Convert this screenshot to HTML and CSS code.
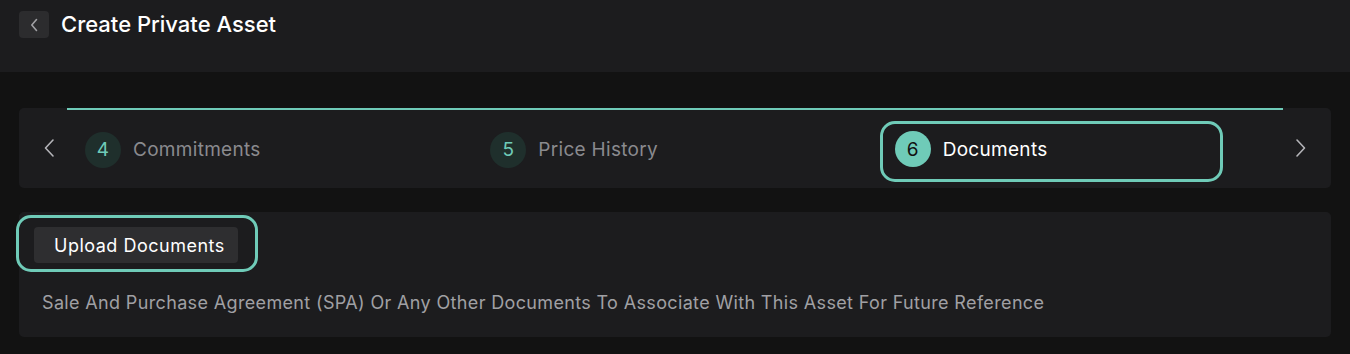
FILE: index.html
```html
<!DOCTYPE html>
<html lang="en">
<head>
    <meta charset="UTF-8">
    <meta name="viewport" content="width=device-width, initial-scale=1.0">
    <title>Create Private Asset</title>
    <link rel="stylesheet" href="styles.css">
</head>
<body>
    <header class="topbar">
        <button class="back-btn" aria-label="Back">
            <svg width="10" height="14" viewBox="0 0 10 14"><path d="M7.5 1.5L2.8 7l4.7 5.5" fill="none" stroke="#a0a0a4" stroke-width="1.6" stroke-linecap="round" stroke-linejoin="round"/></svg>
        </button>
        <h1 class="title">Create Private Asset</h1>
    </header>

    <main class="content">
        <!-- ステップ表示 -->
        <div class="stepper">
            <button class="nav-btn nav-prev" aria-label="Previous">
                <svg width="12" height="20" viewBox="0 0 12 20"><path d="M10 2L2.5 10l7.5 8" fill="none" stroke="#b4b4b8" stroke-width="1.6" stroke-linecap="round" stroke-linejoin="round"/></svg>
            </button>
            <div class="steps">
                <div class="step">
                    <span class="step-num">4</span>
                    <span class="step-label">Commitments</span>
                </div>
                <div class="step">
                    <span class="step-num">5</span>
                    <span class="step-label">Price History</span>
                </div>
                <div class="step-slot">
                    <div class="step step-active">
                        <span class="step-num">6</span>
                        <span class="step-label">Documents</span>
                    </div>
                </div>
            </div>
            <button class="nav-btn nav-next" aria-label="Next">
                <svg width="12" height="20" viewBox="0 0 12 20"><path d="M2 2l7.5 8L2 18" fill="none" stroke="#b4b4b8" stroke-width="1.6" stroke-linecap="round" stroke-linejoin="round"/></svg>
            </button>
        </div>

        <!-- ドキュメント -->
        <section class="doc-card">
            <div class="upload-ring">
                <button class="upload-btn">Upload Documents</button>
            </div>
            <p class="doc-text">Sale And Purchase Agreement (SPA) Or Any Other Documents To Associate With This Asset For Future Reference</p>
        </section>
    </main>
</body>
</html>
```

FILE: styles.css
```css
body {
    margin: 0;
    background-color: #121212;
    font-family: Inter, "Noto Sans", sans-serif;
    color: #fff;
}
button {
    font-family: inherit;
    border: none;
    cursor: pointer;
    padding: 0;
}
.topbar {
    height: 72px;
    box-sizing: border-box;
    background-color: #1c1c1e;
    display: flex;
    align-items: flex-start;
    padding: 11px 19px 0;
    gap: 12px;
}
.back-btn {
    width: 30px;
    height: 27px;
    border-radius: 4px;
    background-color: #2c2c2e;
    display: flex;
    justify-content: center;
    align-items: center;
}
.title {
    margin: 0;
    font-size: 22px;
    font-weight: 500;
    line-height: 26px;
}
.content {
    padding: 36px 19px 0;
}
.stepper {
    display: flex;
    height: 80px;
    background-color: #1c1c1e;
    border-radius: 5px;
}
.nav-btn {
    width: 48px;
    background: none;
    display: flex;
    align-items: center;
}
.nav-prev {
    padding-left: 24px;
}
.nav-next {
    padding-left: 12px;
}
.steps {
    flex: 1;
    display: grid;
    grid-template-columns: repeat(3, 1fr);
    border-top: 2px solid #6fcbb8;
    align-items: center;
}
.step {
    display: flex;
    align-items: center;
    gap: 12px;
    padding-left: 18px;
    margin-top: 1px;
}
.step-slot {
    padding-left: 2px;
    margin-top: 5px;
}
.step-num {
    width: 36px;
    height: 36px;
    border-radius: 50%;
    background-color: #1f2f2c;
    color: #6fcbb8;
    font-size: 19px;
    display: flex;
    justify-content: center;
    align-items: center;
}
.step-label {
    font-size: 19px;
    letter-spacing: 0.3px;
    color: #8a8a8e;
}
.step-active {
    margin: 0;
    padding: 7px 12px 12px;
    width: 343px;
    box-sizing: border-box;
    border: 3px solid #6fcbb8;
    border-radius: 15px;
}
.step-active .step-num {
    background-color: #6fcbb8;
    color: #111;
}
.step-active .step-label {
    color: #fff;
}
.doc-card {
    margin-top: 24px;
    background-color: #1c1c1e;
    border-radius: 5px;
    padding: 3px 0 24px;
}
.upload-ring {
    display: inline-block;
    margin-left: -3px;
    padding: 9px 17px 6px 15px;
    border: 3px solid #6fcbb8;
    border-radius: 15px;
}
.upload-btn {
    display: block;
    height: 36px;
    padding: 0 13px 0 20px;
    border-radius: 4px;
    background-color: #2e2e30;
    color: #fff;
    font-size: 18px;
    letter-spacing: 0.5px;
}
.doc-text {
    margin: 20px 0 0 23px;
    font-size: 18px;
    letter-spacing: 0.35px;
    color: #a0a0a4;
}
```
